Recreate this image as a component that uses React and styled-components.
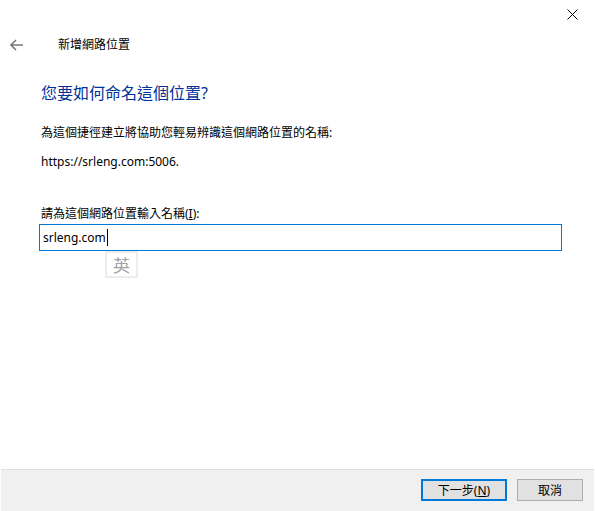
import React from "react";
import styled, { createGlobalStyle } from "styled-components";

const GlobalStyle = createGlobalStyle`
  html, body {
    margin: 0;
    padding: 0;
    background: #ffffff;
  }
  body {
    font-family: "Noto Sans", "Noto Sans CJK TC", sans-serif;
    color: #000000;
  }
`;

const Window = styled.div`
  width: 595px;
  height: 511px;
  display: flex;
  flex-direction: column;
  background: #ffffff;
  overflow: hidden;
`;

const TitleBar = styled.div`
  height: 30px;
  display: flex;
  justify-content: flex-end;
`;

const CloseButton = styled.div`
  width: 46px;
  height: 29px;
  display: flex;
  align-items: center;
  justify-content: center;
`;

const NavRow = styled.div`
  height: 30px;
  display: flex;
  align-items: center;
`;

const BackButton = styled.div`
  width: 32px;
  height: 30px;
  display: flex;
  align-items: center;
  justify-content: center;
`;

const NavTitle = styled.span`
  font-size: 12px;
  margin-left: 26px;
  line-height: 16px;
`;

const Content = styled.div`
  flex: 1;
  padding: 0 33px 0 39px;
  display: flex;
  flex-direction: column;
`;

const Heading = styled.h1`
  margin: 23px 0 0 2px;
  font-size: 16px;
  font-weight: normal;
  line-height: 21px;
  color: #003399;
`;

const Text = styled.p`
  margin: ${(p) => p.$top}px 0 0 2px;
  font-size: 12px;
  line-height: 18px;
`;

const InputWrap = styled.div`
  position: relative;
  margin-top: 1px;
`;

const Input = styled.div`
  height: 25px;
  border: 1px solid #0078d7;
  display: flex;
  align-items: center;
  padding-left: 3px;
  font-size: 12px;
`;

const Caret = styled.span`
  display: inline-block;
  width: 1px;
  height: 17px;
  background: #000000;
  margin-left: 1px;
`;

const ImeBox = styled.div`
  position: absolute;
  left: 66px;
  top: 27px;
  width: 29px;
  height: 23px;
  border: 2px solid #ededed;
  display: flex;
  align-items: center;
  justify-content: center;
  color: #a0a0a0;
  font-size: 17px;
  font-weight: normal;
  background: #ffffff;
`;

const Footer = styled.div`
  height: 42px;
  border-top: 1px solid #dfdfdf;
  background: #f0f0f0;
  margin: 0 1px;
  display: flex;
  justify-content: flex-end;
  align-items: flex-start;
  gap: 10px;
  padding: 9px 11px 0 0;
  box-sizing: border-box;
`;

const Button = styled.div`
  box-sizing: border-box;
  width: ${(p) => p.$w}px;
  height: 22px;
  background: #e1e1e1;
  border: ${(p) => (p.$default ? "2px solid #0078d7" : "1px solid #adadad")};
  display: flex;
  align-items: center;
  justify-content: center;
  font-size: 12px;
`;

const U = styled.span`
  text-decoration: underline;
`;

export default function App() {
  return (
    <Window>
      <GlobalStyle />
      <TitleBar>
        <CloseButton>
          <svg width="11" height="11" viewBox="0 0 11 11">
            <path d="M0.5 0.5 L10.5 10.5 M10.5 0.5 L0.5 10.5" stroke="#000" strokeWidth="1" fill="none" />
          </svg>
        </CloseButton>
      </TitleBar>
      <NavRow>
        <BackButton>
          <svg width="13" height="12" viewBox="0 0 13 12">
            <path d="M1 6 H13 M6 1 L1 6 L6 11" stroke="#7a7a7a" strokeWidth="1.6" fill="none" />
          </svg>
        </BackButton>
        <NavTitle>新增網路位置</NavTitle>
      </NavRow>
      <Content>
        <Heading>您要如何命名這個位置?</Heading>
        <Text $top={20}>為這個捷徑建立將協助您輕易辨識這個網路位置的名稱:</Text>
        <Text $top={11}>https://srleng.com:5006.</Text>
        <Text $top={34}>
          請為這個網路位置輸入名稱(<U>I</U>):
        </Text>
        <InputWrap>
          <Input>
            srleng.com
            <Caret />
          </Input>
          <ImeBox>英</ImeBox>
        </InputWrap>
      </Content>
      <Footer>
        <Button $w={86} $default>
          下一步(<U>N</U>)
        </Button>
        <Button $w={66}>取消</Button>
      </Footer>
    </Window>
  );
}
